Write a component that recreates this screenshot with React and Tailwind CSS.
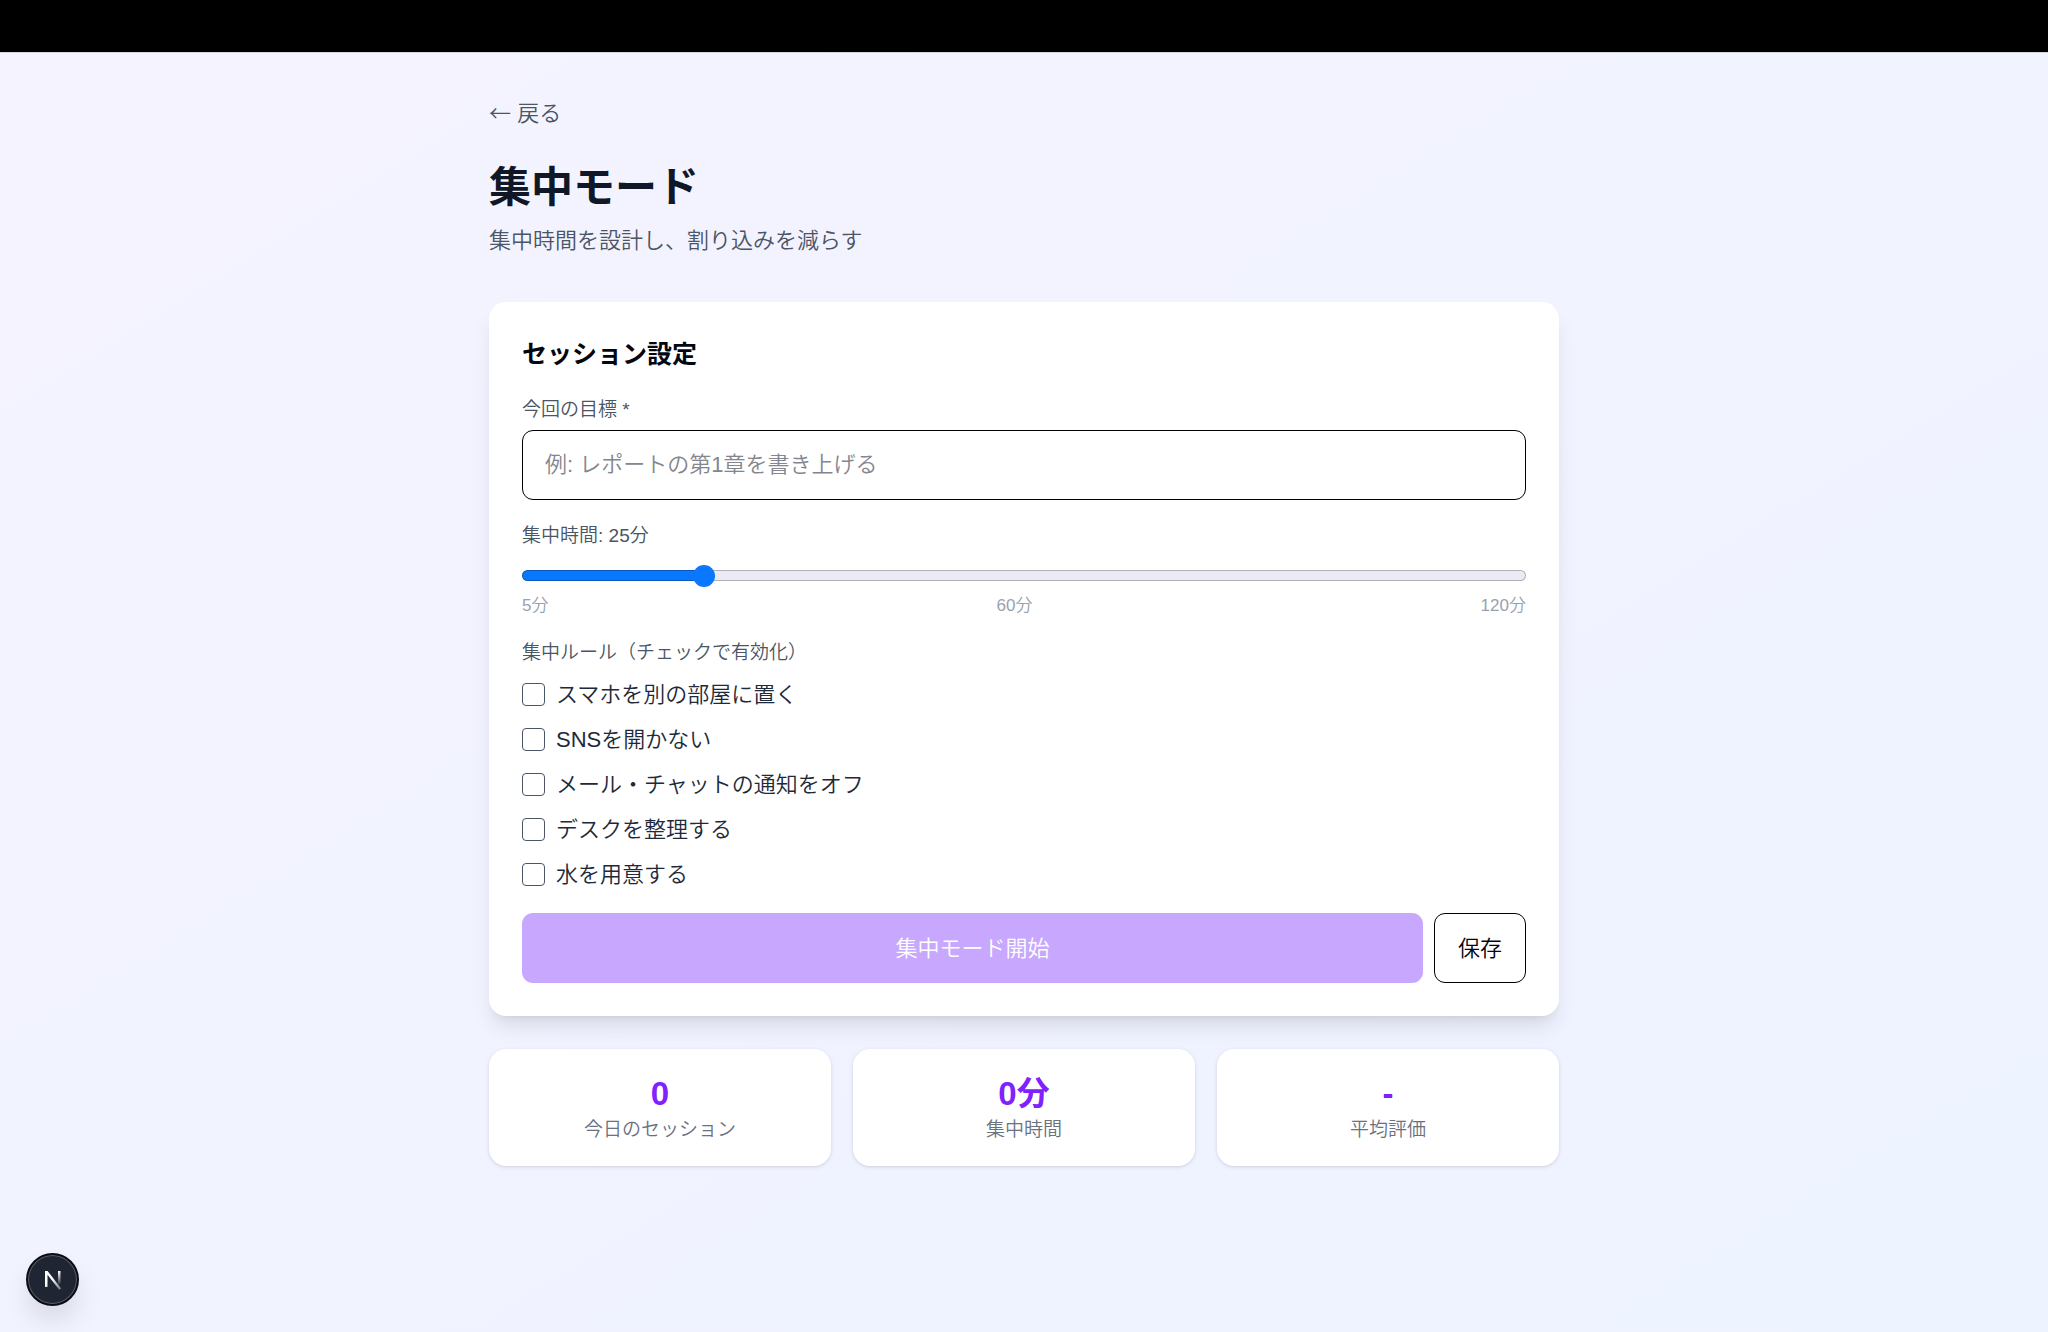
import { useState } from 'react'

const RULES = [
  'スマホを別の部屋に置く',
  'SNSを開かない',
  'メール・チャットの通知をオフ',
  'デスクを整理する',
  '水を用意する',
]

const STATS = [
  { label: '今日のセッション', value: '0' },
  { label: '集中時間', value: '0分' },
  { label: '平均評価', value: '-' },
]

const MIN = 5
const MAX = 120

function DurationSlider({ value, onChange }) {
  const ratio = (value - MIN) / (MAX - MIN)

  return (
    <input
      id="duration"
      type="range"
      min={MIN}
      max={MAX}
      value={value}
      onChange={(e) => onChange(Number(e.target.value))}
      style={{ '--fill': `${ratio * 100}%` }}
      className="block w-full h-[22px] appearance-none bg-transparent [&::-webkit-slider-runnable-track]:h-[11px] [&::-webkit-slider-runnable-track]:rounded-full [&::-webkit-slider-runnable-track]:border [&::-webkit-slider-runnable-track]:border-black/25 [&::-webkit-slider-runnable-track]:bg-origin-border [&::-webkit-slider-runnable-track]:bg-[linear-gradient(to_right,#0a77ff_var(--fill),#ebebf3_var(--fill))] [&::-webkit-slider-thumb]:appearance-none [&::-webkit-slider-thumb]:size-[22px] [&::-webkit-slider-thumb]:-mt-[6px] [&::-webkit-slider-thumb]:rounded-full [&::-webkit-slider-thumb]:bg-[#0a77ff]"
    />
  )
}

function SessionForm() {
  const [goal, setGoal] = useState('')
  const [duration, setDuration] = useState(25)

  return (
    <section className="bg-white rounded-[17px] p-[33px] mb-[33px] shadow-[0_14px_21px_-4px_rgba(0,0,0,0.1),0_6px_8px_-6px_rgba(0,0,0,0.1)]">
      <h2 className="text-[25px] leading-[39px] font-bold mb-[22px]">セッション設定</h2>

      {/* Goal */}
      <div className="mb-[22px]">
        <label htmlFor="goal" className="block text-[19px] leading-[28px] text-gray-600 mb-[6px]">
          今回の目標 *
        </label>
        <input
          id="goal"
          type="text"
          value={goal}
          onChange={(e) => setGoal(e.target.value)}
          placeholder="例: レポートの第1章を書き上げる"
          className="block w-full h-[70px] px-[22px] rounded-[11px] border border-black placeholder:text-[#83868f]"
        />
      </div>

      {/* Duration */}
      <div className="mb-[22px]">
        <label htmlFor="duration" className="block text-[19px] leading-[28px] text-gray-600 mb-[14px]">
          集中時間: {duration}分
        </label>
        <DurationSlider value={duration} onChange={setDuration} />
        <div className="flex justify-between mt-[9px] text-[17px] leading-[22px] text-gray-400">
          <span>5分</span>
          <span>60分</span>
          <span>120分</span>
        </div>
      </div>

      {/* Rules */}
      <fieldset className="mb-[22px]">
        <legend className="text-[19px] leading-[28px] text-gray-600 mb-[11px]">
          集中ルール（チェックで有効化）
        </legend>
        <div className="flex flex-col gap-[12px]">
          {RULES.map((rule) => (
            <label key={rule} className="flex items-center gap-[11px] text-gray-800">
              <input
                type="checkbox"
                className="appearance-none size-[23px] rounded-[4px] border border-gray-600 bg-white checked:bg-[#0a77ff]"
              />
              <span>{rule}</span>
            </label>
          ))}
        </div>
      </fieldset>

      <div className="flex gap-[11px]">
        <button
          type="button"
          disabled={!goal}
          className="flex-1 h-[70px] rounded-[11px] bg-[#7f22fe] text-white disabled:bg-[#c8a8ff]"
        >
          集中モード開始
        </button>
        <button type="button" className="h-[70px] px-[23px] rounded-[11px] border border-black">
          保存
        </button>
      </div>
    </section>
  )
}

function DevBadge() {
  return (
    <button
      type="button"
      aria-label="Dev Tools"
      className="fixed left-[26px] bottom-[26px] size-[53px] rounded-full bg-[#1f2533] border-2 border-[#0b0d14] shadow-[inset_0_0_0_1px_#5b6170,0_16px_32px_-8px_rgba(0,0,0,0.2)] flex items-center justify-center"
    >
      <svg width="20" height="22" viewBox="0 0 20 22" fill="none">
        <defs>
          <linearGradient id="diag" x1="9" y1="10" x2="17" y2="20" gradientUnits="userSpaceOnUse">
            <stop stopColor="#fff" />
            <stop offset="1" stopColor="#fff" stopOpacity="0.4" />
          </linearGradient>
          <linearGradient id="stem" x1="16" y1="2" x2="16" y2="15" gradientUnits="userSpaceOnUse">
            <stop stopColor="#fff" />
            <stop offset="1" stopColor="#fff" stopOpacity="0.1" />
          </linearGradient>
        </defs>
        <path d="M2 2H4.6L18.2 19.4L16.2 20.8L4.5 5.8V18H2Z" fill="url(#diag)" />
        <path d="M15 2H17.5V15H15Z" fill="url(#stem)" />
      </svg>
    </button>
  )
}

export default function App() {
  return (
    <div className="min-h-screen flex flex-col font-[350] text-[22px] leading-[33px] text-gray-950 font-['Liberation_Sans','Noto_Sans_CJK_JP',sans-serif]">
      <header className="h-[52px] bg-black" />

      <main className="flex-1 bg-linear-to-br from-violet-50 to-[#edf3ff] border-t border-gray-300 px-8 py-[44px]">
        <div className="max-w-[1070px] mx-auto">
          <a href="#" className="inline-block text-gray-600 mb-[33px]">
            <span className="font-['Noto_Sans_CJK_JP',sans-serif] leading-none">←</span> 戻る
          </a>
          <h1 className="text-[42px] leading-[50px] font-bold text-gray-900 mb-[11px]">集中モード</h1>
          <p className="text-gray-600 mb-[45px]">集中時間を設計し、割り込みを減らす</p>

          <SessionForm />

          <div className="grid grid-cols-3 gap-[22px]">
            {STATS.map((stat) => (
              <div
                key={stat.label}
                className="bg-white rounded-[17px] p-[22px] text-center shadow-[0_1px_4px_rgba(0,0,0,0.1),0_1px_3px_-1px_rgba(0,0,0,0.1)]"
              >
                <div className="text-[33px] leading-[45px] font-bold text-[#7f22fe]">{stat.value}</div>
                <div className="text-[19px] leading-[28px] text-gray-500">{stat.label}</div>
              </div>
            ))}
          </div>
        </div>
      </main>

      <DevBadge />
    </div>
  )
}
